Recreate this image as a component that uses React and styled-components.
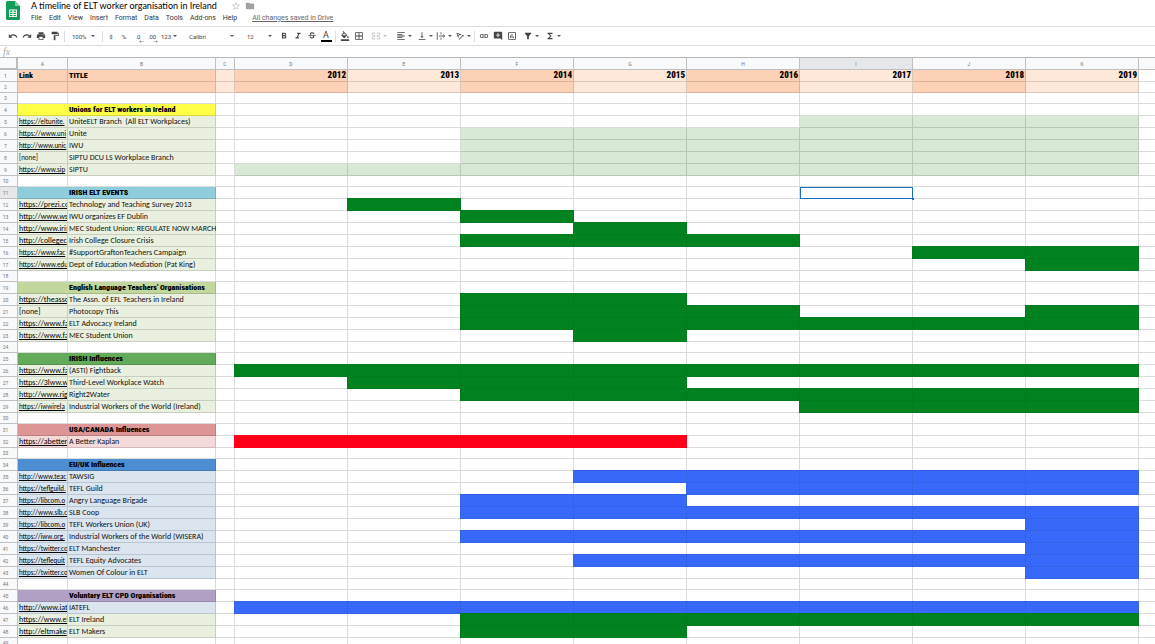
import React from "react";
import styled, { createGlobalStyle, css } from "styled-components";
import {
  MdUndo,
  MdRedo,
  MdPrint,
  MdFormatPaint,
  MdFormatBold,
  MdFormatItalic,
  MdStrikethroughS,
  MdFormatColorFill,
  MdBorderAll,
  MdFormatAlignLeft,
  MdVerticalAlignBottom,
  MdTextRotationAngleup,
  MdLink,
  MdAddComment,
  MdInsertChartOutlined,
  MdFilterAlt,
  MdFunctions,
  MdFolder,
  MdStarBorder,
} from "react-icons/md";

const menus = ["File", "Edit", "View", "Insert", "Format", "Data", "Tools", "Add-ons", "Help"];
const years = { D: 2012, E: 2013, F: 2014, G: 2015, H: 2016, I: 2017, J: 2018, K: 2019 };
const yearCols = Object.keys(years);
const columns = ["A", "B", "C", ...yearCols, ""];

const GREEN = "#00821f";
const BLUE = "#3868f8";
const RED = "#ff0018";
const MINT = "#d8e9d6";
const OLIVE = "#e9f0df";
const SKY = "#dbe5f0";
const PEACH = "#fdd1b5";
const CREAM = "#fde8da";

// grid line colour inside a solid bar
const edges = { [GREEN]: "#007b21", [BLUE]: "#3563e6", [RED]: "#f80018" };

const item = (link, title, cols, bar = GREEN, fill = OLIVE, low = false) => ({
  link,
  title,
  cols,
  bar,
  fill,
  low,
});
const heading = (title, fill) => ({ title, fill, heading: true });
const blank = { blank: true };

const rows = [
  { years: true },
  { years: true, blank: true },
  blank,
  heading("Unions for ELT workers in Ireland", "#ffff48"),
  item("https://eltunite.", "UniteELT Branch  (All ELT Workplaces)", "IJK", MINT, OLIVE, true),
  item("https://www.uni", "Unite", "FGHIJK", MINT, OLIVE, true),
  item("http://www.unic", "IWU", "FGHIJK", MINT, OLIVE, true),
  item("", "SIPTU DCU LS Workplace Branch", "FGHIJK", MINT, OLIVE, true),
  item("https://www.sip", "SIPTU", "DEFGHIJK", MINT, OLIVE, true),
  blank,
  heading("IRISH ELT EVENTS", "#8fcddc"),
  item("https://prezi.co", "Technology and Teaching Survey 2013", "E"),
  item("http://www.ws", "IWU organizes EF Dublin", "F"),
  item("http://www.iris", "MEC Student Union: REGULATE NOW MARCH", "G"),
  item("http://collegec", "Irish College Closure Crisis", "FGH"),
  item("https://www.fac", "#SupportGraftonTeachers Campaign", "JK", GREEN, OLIVE, true),
  item("https://www.edu", "Dept of Education Mediation (Pat King)", "K", GREEN, OLIVE, true),
  blank,
  heading("English Language Teachers' Organisations", "#c2d79d"),
  item("https://theasso", "The Assn. of EFL Teachers in Ireland", "FG"),
  item("", "Photocopy This", "FGHK"),
  item("https://www.fa", "ELT Advocacy Ireland", "FGHIJK"),
  item("https://www.fa", "MEC Student Union", "G"),
  blank,
  heading("IRISH Influences", "#63ab5b"),
  item("https://www.fa", "(ASTI) Fightback", "DEFGHIJK"),
  item("https://3lww.w", "Third-Level Workplace Watch", "EFG"),
  item("http://www.rig", "Right2Water", "FGHIJK"),
  item("https://iwwirela", "Industrial Workers of the World (Ireland)", "IJK", GREEN, OLIVE, true),
  blank,
  heading("USA/CANADA Influences", "#dd9695"),
  item("https://abetter", "A Better Kaplan", "DEFG", RED, "#f4dadb"),
  blank,
  heading("EU/UK Influences", "#4d8ed2"),
  item("http://www.teac", "TAWSIG", "GHIJK", BLUE, SKY, true),
  item("https://teflguild.", "TEFL Guild", "HIJK", BLUE, SKY, true),
  item("https://libcom.o", "Angry Language Brigade", "FG", BLUE, SKY, true),
  item("http://www.slb.c", "SLB Coop", "FGHIJK", BLUE, SKY, true),
  item("https://libcom.o", "TEFL Workers Union (UK)", "K", BLUE, SKY, true),
  item("https://iww.org.", "Industrial Workers of the World (WISERA)", "FGHIJK", BLUE, SKY, true),
  item("https://twitter.co", "ELT Manchester", "K", BLUE, SKY, true),
  item("https://teflequit", "TEFL Equity Advocates", "GHIJK", BLUE, SKY, true),
  item("https://twitter.co", "Women Of Colour in ELT", "K", BLUE, SKY, true),
  blank,
  heading("Voluntary ELT CPD Organisations", "#b0a0c4"),
  item("http://www.iat", "IATEFL", "DEFGHIJK", BLUE, SKY),
  item("https://www.el", "ELT Ireland", "FGHIJK"),
  item("http://eltmake", "ELT Makers", "FG"),
  blank,
];

const ACTIVE_ROW = 11;
const ACTIVE_COL = "I";

const Arrow = ({ faint }) => (
  <ArrowIcon viewBox="0 0 6 3" $faint={faint} aria-hidden="true">
    <path d="M0 0h6L3 3z" />
  </ArrowIcon>
);

const DecimalArrow = ({ right }) => (
  <Sub>
    <svg viewBox="0 0 8 4" width="5" height="3" aria-hidden="true">
      <path d={right ? "M0 1.500h5V0l3 2-3 2V2.500H0z" : "M8 1.500H3V0L0 2l3 2V2.500h5z"} fill="#888" />
    </svg>
  </Sub>
);

const SheetsLogo = () => (
  <Logo viewBox="0 0 14 19" aria-label="Sheets">
    <path d="M1.500 0H9l5 5v12.500a1.500 1.500 0 0 1-1.500 1.500h-11A1.500 1.500 0 0 1 0 17.500v-16A1.500 1.500 0 0 1 1.500 0z" fill="#0f9d58" />
    <path d="M9 0l5 5H9z" fill="#87ceac" />
    <path d="M3 8.500h8v7.500H3zM4 9.500v1.300h2.500V9.500zm3.500 0v1.300H10V9.500zM4 11.700V13h2.500v-1.300zm3.500 0V13H10v-1.300zM4 13.900v1.200h2.500v-1.200zm3.500 0v1.200H10v-1.200z" fill="#fff" fillRule="evenodd" />
  </Logo>
);

const MergeIcon = () => (
  <svg viewBox="0 0 24 24" fill="none" stroke="currentColor" strokeWidth="2">
    <path d="M3 9V5h7M14 5h7v4M3 15v4h7M14 19h7v-4M2 12h7M22 12h-7M7 9.500l2.500 2.500L7 14.500M17 9.500L14.500 12l2.500 2.500" />
  </svg>
);

const WrapIcon = () => (
  <svg viewBox="0 0 24 24" fill="none" stroke="currentColor" strokeWidth="2">
    <path d="M3 3v18M12 3v5M12 16v5M7 12h14M17 8.500l4 3.500-4 3.500" />
  </svg>
);

const Toolbar = () => (
  <ToolbarRow role="toolbar" aria-label="Formatting">
    <ToolGroup>
      <Tool aria-label="Undo"><MdUndo /></Tool>
      <Tool aria-label="Redo"><MdRedo /></Tool>
      <Tool aria-label="Print"><MdPrint /></Tool>
      <Tool aria-label="Paint format"><MdFormatPaint /></Tool>
    </ToolGroup>
    <ToolGroup>
      <Picker label="Zoom" value="100%" width={33} />
    </ToolGroup>
    <ToolGroup>
      <Tool aria-label="Currency" $width={12}>$</Tool>
      <Tool aria-label="Percent" $width={14}>%</Tool>
      <Tool aria-label="Fewer decimals">.0<DecimalArrow /></Tool>
      <Tool aria-label="More decimals">.00<DecimalArrow right /></Tool>
      <Tool aria-label="More formats" $width={20}>123<Arrow /></Tool>
      <Picker label="Font" value="Calibri" width={60} lead={10} />
      <Picker label="Font size" value="12" width={38} lead={8} />
      <Tool aria-label="Bold"><MdFormatBold /></Tool>
      <Tool aria-label="Italic"><MdFormatItalic /></Tool>
      <Tool aria-label="Strikethrough"><MdStrikethroughS /></Tool>
      <Tool aria-label="Text color"><TextColor>A</TextColor></Tool>
    </ToolGroup>
    <ToolGroup>
      <Tool aria-label="Fill color"><MdFormatColorFill /></Tool>
      <Tool aria-label="Borders"><MdBorderAll /></Tool>
      <Tool aria-label="Merge cells" $width={26} disabled><MergeIcon /><Arrow faint /></Tool>
      <Tool aria-label="Horizontal align" $width={23}><MdFormatAlignLeft /><Arrow /></Tool>
      <Tool aria-label="Vertical align" $width={19}><MdVerticalAlignBottom /><Arrow /></Tool>
      <Tool aria-label="Text wrapping" $width={19}><WrapIcon /><Arrow /></Tool>
      <Tool aria-label="Text rotation" $width={19}><MdTextRotationAngleup /><Arrow /></Tool>
    </ToolGroup>
    <ToolGroup $last>
      <Tool aria-label="Insert link"><MdLink /></Tool>
      <Tool aria-label="Insert comment"><MdAddComment /></Tool>
      <Tool aria-label="Insert chart"><MdInsertChartOutlined /></Tool>
      <Tool aria-label="Filter" $width={24}><MdFilterAlt /><Arrow /></Tool>
      <Tool aria-label="Functions" $width={20}><MdFunctions /><Arrow /></Tool>
    </ToolGroup>
  </ToolbarRow>
);

const Picker = ({ label, value, width, lead = 5 }) => (
  <PickerBox $width={width} $lead={lead}>
    <select aria-label={label} defaultValue={value}>
      <option>{value}</option>
    </select>
    <Arrow />
  </PickerBox>
);

const SheetRow = ({ row, number }) => {
  const cells = yearCols.map((col, i) => {
    if (row.years) {
      return (
        <Cell key={col} $fill={i % 2 ? CREAM : PEACH} $year>
          {row.blank ? "" : years[col]}
        </Cell>
      );
    }
    const filled = Boolean(row.cols) && row.cols.includes(col);
    return (
      <Cell
        key={col}
        $fill={filled ? row.bar : undefined}
        $edge={filled ? edges[row.bar] : undefined}
        $first={filled && !row.cols.includes(yearCols[i - 1])}
        $active={number === ACTIVE_ROW && col === ACTIVE_COL}
      />
    );
  });

  return (
    <Row $short={row.blank}>
      <RowNumber scope="row" $active={number === ACTIVE_ROW}>{number}</RowNumber>
      {row.years ? (
        <>
          <Cell $fill={PEACH} $heading>{row.blank ? "" : "Link"}</Cell>
          <Cell $fill={PEACH} $heading>{row.blank ? "" : "TITLE"}</Cell>
          <Cell $fill={CREAM} />
        </>
      ) : (
        <>
          <Cell $fill={row.fill} $low={row.low} $merged={row.heading} $clip>
            {row.link && <SheetLink href={row.link}>{row.link}</SheetLink>}
            {row.link === "" && "[none]"}
          </Cell>
          <Cell $fill={row.fill} $heading={row.heading}>{row.title}</Cell>
          <Cell />
        </>
      )}
      {cells}
      <Cell />
    </Row>
  );
};

const App = () => (
  <Page>
    <GlobalStyle />
    <Header>
      <SheetsLogo />
      <div>
        <TitleRow>
          <h1>A timeline of ELT worker organisation in Ireland</h1>
          <IconButton aria-label="Star"><MdStarBorder /></IconButton>
          <IconButton aria-label="Move to folder" $dark><MdFolder /></IconButton>
        </TitleRow>
        <MenuRow>
          {menus.map((name) => (
            <button key={name}>{name}</button>
          ))}
          <a href="#saved">All changes saved in Drive</a>
        </MenuRow>
      </div>
    </Header>
    <Toolbar />
    <FormulaBar>
      <label htmlFor="formula">fx</label>
      <input id="formula" type="text" />
    </FormulaBar>
    <Sheet>
      <Grid>
        <colgroup>
          <Col $width={18} />
          <Col $width={50} />
          <Col $width={148} />
          <Col $width={19} />
          {yearCols.map((col) => (
            <Col key={col} $width={113} />
          ))}
          <col />
        </colgroup>
        <thead>
          <tr>
            <Corner />
            {columns.map((col) => (
              <ColumnName key={col} scope="col" $active={col === ACTIVE_COL}>{col}</ColumnName>
            ))}
          </tr>
        </thead>
        <tbody>
          {rows.map((row, i) => (
            <SheetRow key={i} row={row} number={i + 1} />
          ))}
        </tbody>
      </Grid>
    </Sheet>
  </Page>
);

export default App;

const GlobalStyle = createGlobalStyle`
  * {
    box-sizing: border-box;
  }

  body {
    margin: 0;
    background: #fff;
    font-family: Roboto, "Liberation Sans", sans-serif;
    font-size: 7px;
    color: #222;
  }

  button,
  select,
  input {
    margin: 0;
    padding: 0;
    border: 0;
    background: none;
    font: inherit;
    color: inherit;
  }
`;

const Page = styled.div`
  display: flex;
  flex-direction: column;
  height: 100vh;
  overflow: hidden;
`;

const Header = styled.header`
  display: flex;
  gap: 11px;
  height: 26px;
  flex: none;
  padding-left: 6px;
`;

const Logo = styled.svg`
  width: 14px;
  height: 19px;
  margin-top: 1px;
`;

const TitleRow = styled.div`
  display: flex;
  align-items: center;
  height: 11px;

  h1 {
    margin: 0 14px 0 0;
    font-family: Lato, "Open Sans", sans-serif;
    font-size: 9px;
    line-height: 11px;
    font-weight: 400;
    color: #000;
  }
`;

const IconButton = styled.button`
  display: flex;
  margin-right: 4px;
  font-size: 10px;
  color: ${(props) => (props.$dark ? "#a0a0a0" : "#c4c4c4")};
`;

const MenuRow = styled.nav`
  display: flex;
  align-items: center;
  gap: 7px;
  height: 13px;
  color: #333;

  a {
    margin-left: 8px;
    color: #666;
  }
`;

const ToolbarRow = styled.div`
  display: flex;
  align-items: center;
  flex: none;
  height: 20px;
  padding-left: 4px;
  border-top: 1px solid #dadce0;
  border-bottom: 1px solid #dadce0;
  font-size: 6px;
  color: #444;
`;

const ToolGroup = styled.div`
  display: flex;
  align-items: center;
  height: 11px;
  padding: 0 2px;
  border-right: ${(props) => (props.$last ? "0" : "1px solid #dadce0")};
`;

const Tool = styled.button`
  position: relative;
  display: flex;
  align-items: center;
  justify-content: center;
  gap: 2px;
  width: ${(props) => props.$width || 14}px;
  height: 11px;

  &:disabled {
    color: #bbb;
  }

  > svg:first-child {
    width: 10px;
    height: 10px;
  }
`;

const Sub = styled.span`
  position: absolute;
  right: 1px;
  bottom: -1px;
  display: flex;
`;

const TextColor = styled.span`
  width: 11px;
  border-bottom: 2px solid #000;
  font-size: 9px;
  line-height: 10px;
`;

const ArrowIcon = styled.svg`
  &&& {
    flex: none;
    width: 4px;
    height: 2px;
    fill: ${(props) => (props.$faint ? "#bbb" : "#555")};
  }
`;

const PickerBox = styled.span`
  display: flex;
  align-items: center;
  width: ${(props) => props.$width}px;
  padding: 0 5px 0 ${(props) => props.$lead}px;

  select {
    flex: 1;
    min-width: 0;
    appearance: none;
  }
`;

const FormulaBar = styled.div`
  display: flex;
  align-items: center;
  flex: none;
  height: 11px;

  label {
    padding-left: 3px;
    font: italic 10px "Liberation Serif", serif;
    color: #aaa;
  }

  input {
    flex: 1;
    height: 10px;
    margin-left: 6px;
    outline: 0;
  }
`;

const Sheet = styled.main`
  flex: 1;
  min-height: 0;
  overflow: hidden;
  border-top: 1px solid #b7b7b7;
`;

const Grid = styled.table`
  width: 100%;
  table-layout: fixed;
  border-collapse: separate;
  border-spacing: 0;

  tr > :last-child {
    border-right: 0;
  }
`;

const Col = styled.col`
  width: ${(props) => props.$width}px;
`;

const ColumnName = styled.th`
  height: 12px;
  padding: 0;
  border-right: 1px solid #c0c0c0;
  border-bottom: 1px solid #c0c0c0;
  background: ${(props) => (props.$active ? "#e6e7eb" : "#f8f9fa")};
  font-size: 5px;
  line-height: 10px;
  font-weight: 400;
  color: #777;
`;

const Corner = styled.td`
  padding: 0;
  border-right: 2px solid #bcbcbc;
  border-bottom: 2px solid #bcbcbc;
  background: #f8f9fa;
`;

const Row = styled.tr`
  height: ${(props) => (props.$short ? 11 : 12)}px;
`;

const RowNumber = styled(ColumnName)`
  height: auto;
  padding-right: 6px;
  text-align: center;
`;

const Cell = styled.td`
  height: inherit;
  padding: 0 1px;
  border-right: 1px solid rgba(0, 0, 0, 0.14);
  border-bottom: 1px solid rgba(0, 0, 0, 0.14);
  background: ${(props) => props.$fill || "transparent"};
  font-family: Carlito, "Noto Sans CJK SC", Lato, sans-serif;
  font-size: 8px;
  line-height: 10px;
  color: #111;
  white-space: pre;
  overflow: ${(props) => (props.$clip ? "hidden" : "visible")};
  vertical-align: top;

  ${(props) =>
    props.$low &&
    css`
      font-size: 7px;
      vertical-align: bottom;
    `}

  ${(props) =>
    props.$merged &&
    css`
      border-right-color: transparent;
    `}

  ${(props) =>
    (props.$heading || props.$year) &&
    css`
      font-family: Impact, "Roboto Condensed", "Open Sans Condensed", Roboto, sans-serif;
      font-size: ${props.$year ? 9 : 8}px;
      line-height: 11px;
      font-weight: 900;
      color: #000;
    `}

  ${(props) =>
    props.$year &&
    css`
      text-align: right;
    `}

  ${(props) =>
    props.$edge &&
    css`
      border-color: ${props.$edge};
      box-shadow: 0 -1px 0 ${props.$edge};
    `}

  ${(props) =>
    props.$edge &&
    props.$first &&
    css`
      box-shadow: 0 -1px 0 ${props.$edge}, -1px 0 0 ${props.$edge}, -1px -1px 0 ${props.$edge};
    `}

  ${(props) =>
    props.$active &&
    css`
      position: relative;
      outline: 1px solid #1a6fc4;
      outline-offset: -1px;

      &::after {
        content: "";
        position: absolute;
        right: -2px;
        bottom: -2px;
        width: 2px;
        height: 2px;
        background: #1a6fc4;
      }
    `}
`;

const SheetLink = styled.a`
  color: #000;
`;
